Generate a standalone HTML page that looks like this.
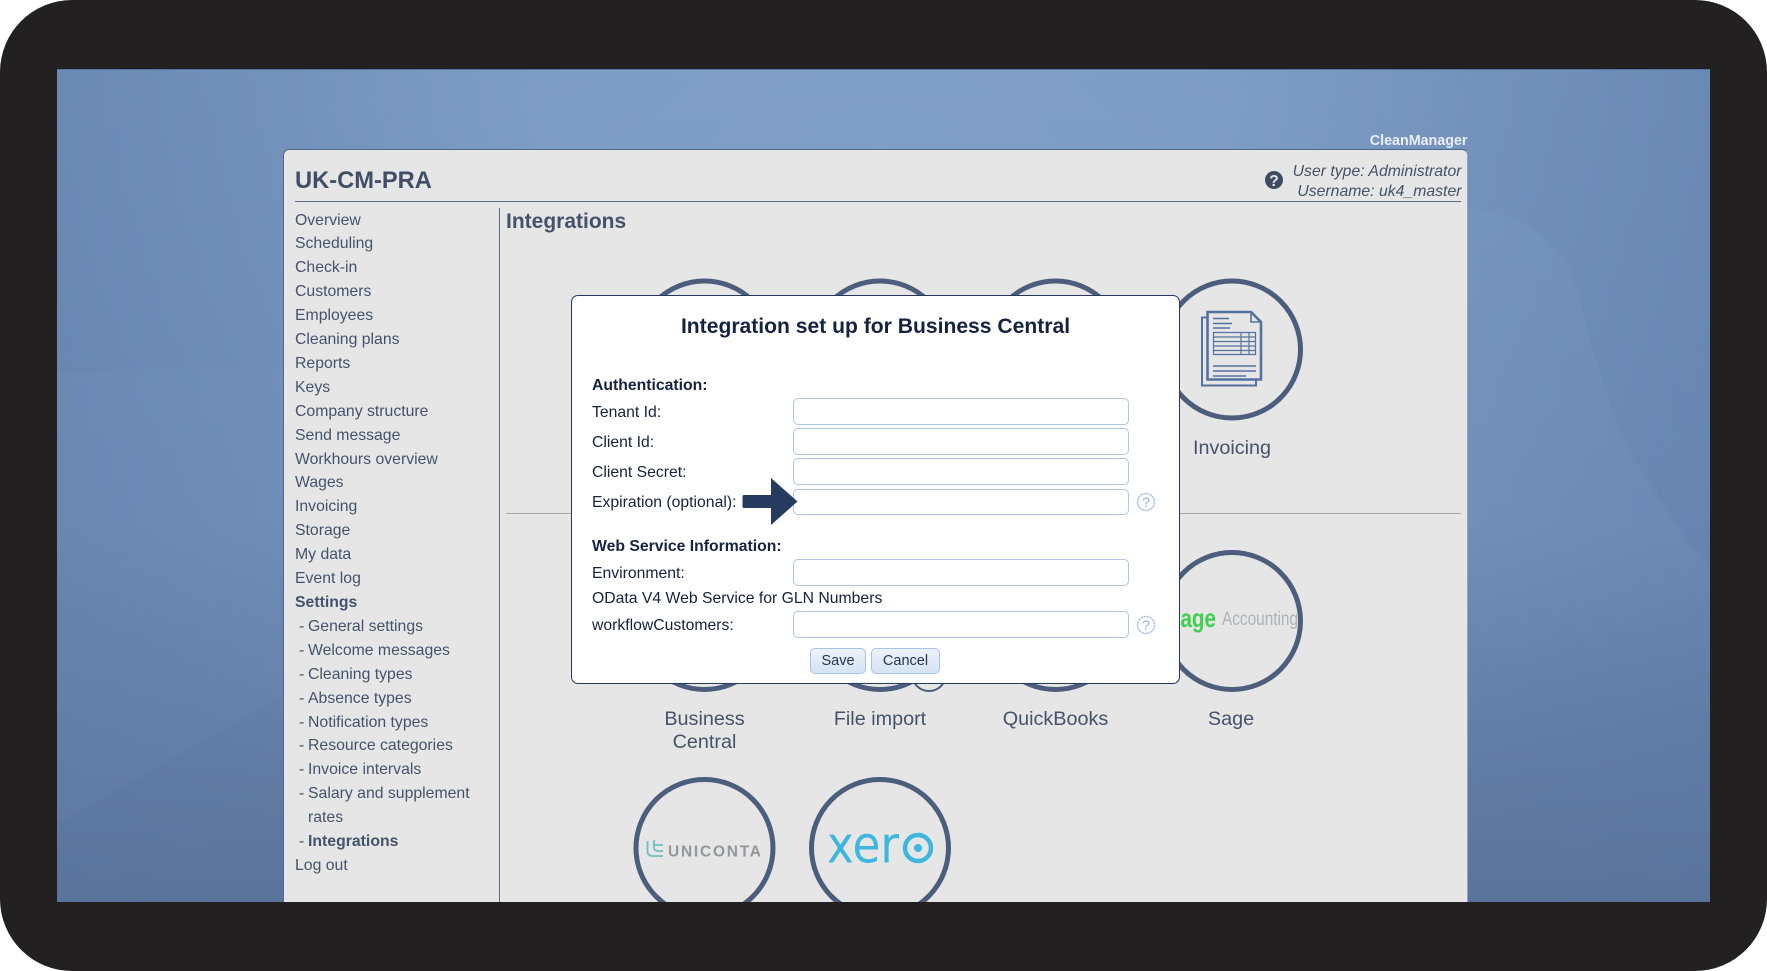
<!DOCTYPE html>
<html lang="en"><head><meta charset="utf-8"><title>Integrations</title>
<style>
*{box-sizing:border-box}
html,body{margin:0;padding:0;background:#fff}
body{width:1767px;height:971px;position:relative;overflow:hidden;font-family:"Liberation Sans",Arial,sans-serif}
.frame{position:absolute;left:0;top:0;width:1767px;height:971px;background:#222021;border-radius:72px;overflow:hidden}
.screen{position:absolute;left:57px;top:69px;width:1653px;height:833px;overflow:hidden;border-top:1px solid #4f74a8}
.abs{position:absolute}
.panel{position:absolute;left:283px;top:149px;width:1185px;height:753px;background:#e6e6e6;border:1px solid #52688a;border-bottom:none;border-radius:6px 6px 0 0;border-right-color:#8ea4c4}
.menu{position:absolute;left:295px;top:208.5px;width:200px;font-size:15.8px;line-height:23.9px;color:#44536b}
.menu div{white-space:nowrap}
.menu .s{padding-left:13px;position:relative}
.menu .s:before{content:"-";position:absolute;left:4px}
.lbl{position:absolute;font-size:19.8px;line-height:23px;color:#44536b;text-align:center;width:160px}
.modal{position:absolute;left:571px;top:295px;width:609px;height:389px;background:#fff;border:1px solid #243a5c;border-radius:7px}
.t{position:absolute;left:592px;font-size:15.75px;line-height:20px;color:#14233f;white-space:nowrap}
.in{position:absolute;left:792.5px;width:336.5px;height:26.5px;background:#fff;border:1.5px solid #aec6e8;border-radius:5px}
.btn{position:absolute;top:648px;height:26px;background:linear-gradient(#edf3fa,#d5e3f4);border:1.5px solid #a9c3e8;border-radius:5px;font-size:14.5px;line-height:24px;color:#26364f;text-align:center}
</style></head>
<body>
<div class="frame">
<div class="screen">
<svg width="1653" height="833" style="position:absolute;left:0;top:0">
<defs>
<linearGradient id="v" x1="0" y1="0" x2="0" y2="1"><stop offset="0" stop-color="#7a99c3"/><stop offset=".55" stop-color="#7492bc"/><stop offset="1" stop-color="#5c7399"/></linearGradient>
<radialGradient id="r" cx=".5" cy=".1" r=".6"><stop offset="0" stop-color="#8aa8d0" stop-opacity=".45"/><stop offset="1" stop-color="#8aa8d0" stop-opacity="0"/></radialGradient>
<linearGradient id="l" x1="0" y1="0" x2="1" y2="0"><stop offset="0" stop-color="#56749f" stop-opacity=".45"/><stop offset=".3" stop-color="#56749f" stop-opacity="0"/><stop offset=".7" stop-color="#56749f" stop-opacity="0"/><stop offset="1" stop-color="#56749f" stop-opacity=".45"/></linearGradient>
<linearGradient id="f" x1="0" y1="0" x2="0" y2="1"><stop offset="0" stop-color="#8aa8d0" stop-opacity=".12"/><stop offset=".6" stop-color="#8aa8d0" stop-opacity=".12"/><stop offset="1" stop-color="#8aa8d0" stop-opacity="0"/></linearGradient>
</defs>
<rect width="1653" height="833" fill="url(#v)"/>
<rect width="1653" height="833" fill="url(#r)"/>
<rect width="1653" height="833" fill="url(#l)"/>
<path d="M0 302 L230 296 L230 623 L0 754Z" fill="#8aa8d0" opacity=".08"/>
<path d="M1410 137 C1460 145 1500 165 1515 205 C1530 250 1545 330 1576 387 C1600 425 1630 475 1653 497 L1653 660 L1410 660Z" fill="url(#f)"/>
</svg>
</div>

<div class="abs" style="right:299.500px;top:131.500px;width:300px;text-align:right;font-size:14.300px;line-height:18px;font-weight:bold;color:#e9eef5">CleanManager</div>

<div class="panel"></div>
<div class="abs" style="left:295px;top:166px;font-size:23.7px;line-height:30px;font-weight:bold;color:#414f66">UK-CM-PRA</div>
<div class="abs" style="left:295px;top:201px;width:1166px;height:1px;background:#5d6c83"></div>

<svg class="abs" style="left:1265px;top:171px" width="18" height="18" viewBox="0 0 18 18"><circle cx="9" cy="9" r="9" fill="#3f4d63"/><text x="9" y="14.800" text-anchor="middle" font-family="Liberation Sans" font-weight="bold" font-size="15.500" fill="#e6e6e6">?</text></svg>
<div class="abs" style="right:305.500px;top:162px;text-align:right;font-size:15.8px;line-height:20px;font-style:italic;color:#44536b;white-space:nowrap">User type: Administrator<br>Username: uk4_master</div>

<div class="menu">
<div>Overview</div><div>Scheduling</div><div>Check-in</div><div>Customers</div><div>Employees</div><div>Cleaning plans</div><div>Reports</div><div>Keys</div><div>Company structure</div><div>Send message</div><div>Workhours overview</div><div>Wages</div><div>Invoicing</div><div>Storage</div><div>My data</div><div>Event log</div>
<div><b>Settings</b></div>
<div class="s">General settings</div><div class="s">Welcome messages</div><div class="s">Cleaning types</div><div class="s">Absence types</div><div class="s">Notification types</div><div class="s">Resource categories</div><div class="s">Invoice intervals</div><div class="s">Salary and supplement</div><div style="padding-left:13px">rates</div><div class="s"><b>Integrations</b></div>
<div>Log out</div>
</div>

<div class="abs" style="left:499px;top:208px;width:1px;height:694px;background:#5d6c83"></div>
<div class="abs" style="left:506px;top:207.500px;font-size:21px;line-height:27px;font-weight:bold;color:#44536b">Integrations</div>
<div class="abs" style="left:506px;top:513px;width:955px;height:1px;background:#a9a9a9"></div>

<svg class="abs" style="left:0;top:0" width="1767" height="902" viewBox="0 0 1767 902">
<g fill="none" stroke="#4b5f7d" stroke-width="5">
<circle cx="704.500" cy="349.500" r="68.500"/><circle cx="880" cy="349.500" r="68.500"/><circle cx="1055.500" cy="349.500" r="68.500"/><circle cx="1232" cy="349.500" r="68.500"/>
<circle cx="704.500" cy="621" r="68.500"/><circle cx="880" cy="621" r="68.500"/><circle cx="1055.500" cy="621" r="68.500"/><circle cx="1232" cy="621" r="68.500"/>
<circle cx="704.500" cy="848" r="68.500"/><circle cx="880" cy="848" r="68.500"/>
</g>
<circle cx="929" cy="674" r="17" fill="#e6e6e6" stroke="#4b5f7d" stroke-width="2"/>

<!-- invoice icon -->
<g fill="none" stroke="#54729f" stroke-width="2">
<path d="M1207 317.500H1202V385.500H1256V380"/>
<path d="M1207.500 312H1251L1261 322V379.500H1207.500Z" stroke-width="2.600"/>
<path d="M1251 312V322H1261" stroke-width="1.600"/>
<path d="M1213 318.500H1229M1213 323.500H1232M1213 328H1230M1213 366H1256M1213 371H1256M1213 376H1246" stroke-width="1.500"/>
<path d="M1213.500 332.500H1255.500V354.500H1213.500ZM1213.500 337H1255.500M1213.500 341.500H1255.500M1213.500 346H1255.500M1213.500 350.500H1255.500M1241 332.500V354.500M1249 332.500V354.500" stroke-width="1.200"/>
</g>

<!-- sage -->
<text x="1169" y="627" font-family="Liberation Sans" font-size="26" font-weight="bold" fill="#3fd04f" textLength="47" lengthAdjust="spacingAndGlyphs">sage</text>
<text x="1222" y="625" font-family="Liberation Sans" font-size="19" fill="#afb1b3" textLength="76" lengthAdjust="spacingAndGlyphs">Accounting</text>

<!-- uniconta -->
<g fill="none" stroke="#6dc0c4" stroke-width="1.800">
<path d="M647.500 841V851Q647.500 856 653 856H663"/><path d="M654 840V847Q654 851 658 851H663"/><path d="M654 845H663"/>
</g>
<text x="668" y="856.500" font-family="Liberation Sans" font-weight="bold" font-size="15.500" fill="#949698" textLength="93" lengthAdjust="spacing">UNICONTA</text>

<!-- xero -->
<text x="827" y="862.500" font-family="DejaVu Sans" font-size="51" fill="#3db7de" textLength="72" lengthAdjust="spacingAndGlyphs">xer</text>
<circle cx="918" cy="848" r="13" fill="none" stroke="#3db7de" stroke-width="4.500"/><circle cx="918" cy="848" r="4" fill="#3db7de"/>
</svg>

<div class="lbl" style="left:1152px;top:436.500px">Invoicing</div>
<div class="lbl" style="left:624.500px;top:708.300px">Business<br>Central</div>
<div class="lbl" style="left:800px;top:708.300px">File import</div>
<div class="lbl" style="left:975.500px;top:708.300px">QuickBooks</div>
<div class="lbl" style="left:1151px;top:708.300px">Sage</div>

<!-- modal -->
<div class="modal"></div>
<div class="abs" style="left:571px;top:315px;width:609px;text-align:center;font-size:21.1px;line-height:24px;font-weight:bold;color:#14233f">Integration set up for Business Central</div>
<div class="t" style="top:376px;font-weight:bold">Authentication:</div>
<div class="t" style="top:403px">Tenant Id:</div>
<div class="t" style="top:433px">Client Id:</div>
<div class="t" style="top:463px">Client Secret:</div>
<div class="t" style="top:493px">Expiration (optional):</div>
<div class="t" style="top:537px;font-weight:bold">Web Service Information:</div>
<div class="t" style="top:563.500px">Environment:</div>
<div class="t" style="top:589px">OData V4 Web Service for GLN Numbers</div>
<div class="t" style="top:616px">workflowCustomers:</div>
<div class="in" style="top:398px"></div>
<div class="in" style="top:428px"></div>
<div class="in" style="top:458px"></div>
<div class="in" style="top:488.500px"></div>
<div class="in" style="top:559px"></div>
<div class="in" style="top:611px"></div>
<svg class="abs" style="left:742px;top:477px" width="56" height="49" viewBox="0 0 56 49"><path d="M2 18H29V1L55.500 24.500L29 48V31H2Q0.500 31 0.500 29.500V19.500Q0.500 18 2 18Z" fill="#253c5f"/></svg>
<svg class="abs" style="left:1136px;top:492px" width="20" height="20" viewBox="0 0 20 20"><circle cx="10" cy="10" r="8.500" fill="#fff" stroke="#aec6e8" stroke-width="1.600" stroke-dasharray="2.500 .6"/><text x="10" y="15" text-anchor="middle" font-family="Liberation Sans" font-size="14" fill="#8fb0de">?</text></svg>
<svg class="abs" style="left:1136px;top:615px" width="20" height="20" viewBox="0 0 20 20"><circle cx="10" cy="10" r="8.500" fill="#fff" stroke="#aec6e8" stroke-width="1.600" stroke-dasharray="2.500 .6"/><text x="10" y="15" text-anchor="middle" font-family="Liberation Sans" font-size="14" fill="#8fb0de">?</text></svg>
<div class="btn" style="left:810px;width:56px">Save</div>
<div class="btn" style="left:871px;width:69px">Cancel</div>
</div>
</body></html>
